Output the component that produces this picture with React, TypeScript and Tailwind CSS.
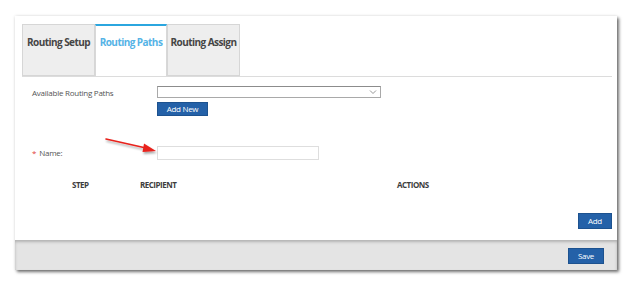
import React from 'react';

const FONT = { fontFamily: '"Open Sans", "Liberation Sans", sans-serif' };

function Tab({ label, active }: { label: string; active?: boolean }) {
  return (
    <div
      className={
        active
          ? 'w-[72px] h-[52px] -mb-px bg-white border-t-2 border-t-[#2ba6df] border-x border-x-[#d8d8d8] pt-[9px] text-center text-[10px] font-bold tracking-[-0.55px] text-[#55b3e6]'
          : 'w-[73px] h-[52px] bg-[#eeeeee] border border-[#d6d6d6] pt-[10px] text-center text-[10px] font-bold tracking-[-0.55px] text-[#454545]'
      }
    >
      {label}
    </div>
  );
}

function BlueButton({ children, className }: { children: React.ReactNode; className?: string }) {
  return (
    <button
      className={
        'h-[14px] bg-[#2461a8] border border-[#1d528f] text-white text-[8px] leading-[12px] tracking-[-0.3px] ' +
        (className ?? '')
      }
    >
      {children}
    </button>
  );
}

export default function App() {
  return (
    <div className="relative w-[626px] h-[282px] bg-white pl-[15px] pt-[16px]" style={FONT}>
      <div className="w-[602px] shadow-[2px_2px_3px_rgba(0,0,0,0.55),0_0_3px_rgba(0,0,0,0.12)]">
        <div className="h-[224px] bg-white pt-[8px] pl-[7px] pr-[5px] flex flex-col">
          <div className="flex h-[53px] border-b border-[#dcdcdc]">
            <Tab label="Routing Setup" />
            <Tab label="Routing Paths" active />
            <Tab label="Routing Assign" />
          </div>

          <div className="flex mt-[9px]">
            <div className="w-[135px] pl-[10px] pt-[1px] text-[8px] tracking-[-0.25px] text-[#555]">
              Available Routing Paths
            </div>
            <div className="flex flex-col gap-[4px]">
              <div className="relative w-[224px] h-[12px] border border-[#a9a9a9] border-t-[#8c8c8c] bg-white">
                <svg className="absolute right-[3px] top-[2px]" width="8" height="6" viewBox="0 0 8 6">
                  <path d="M1 1.5 L4 4.5 L7 1.5" fill="none" stroke="#8a8a8a" strokeWidth="0.9" />
                </svg>
              </div>
              <BlueButton className="w-[51px]">Add New</BlueButton>
            </div>
          </div>

          <div className="flex items-center mt-[30px]">
            <div className="w-[135px] pl-[10px] text-[8px] tracking-[-0.25px] text-[#555]">
              <span className="text-[#e0403a] mr-[3px]">*</span>Name:
            </div>
            <div className="w-[162px] h-[14px] border border-[#dedede] bg-white" />
          </div>

          <div className="flex mt-[19px] pl-[50px] text-[8px] font-bold tracking-[-0.5px] text-[#3d3d3d]">
            <div className="w-[68px]">STEP</div>
            <div className="w-[257px]">RECIPIENT</div>
            <div>ACTIONS</div>
          </div>

          <div className="flex justify-end mt-[22px]">
            <BlueButton className="w-[34px] h-[16px] leading-[14px]">Add</BlueButton>
          </div>
        </div>
        <div className="h-[30px] bg-[#e4e4e4] shadow-[inset_0_2px_3px_rgba(0,0,0,0.22)] flex items-center justify-end pr-[13px] pt-[2px]">
          <BlueButton className="w-[36px] h-[16px] leading-[14px]">Save</BlueButton>
        </div>
      </div>

      <svg className="absolute left-[100px] top-[134px]" width="62" height="24" viewBox="0 0 62 24">
        <defs>
          <filter id="sh" x="-20%" y="-50%" width="140%" height="200%">
            <feDropShadow dx="1" dy="2" stdDeviation="1.2" floodColor="#000" floodOpacity="0.35" />
          </filter>
        </defs>
        <g filter="url(#sh)">
          <line x1="6" y1="5" x2="46" y2="14" stroke="#e8231d" strokeWidth="1.6" strokeLinecap="round" />
          <path d="M56 17 L44 9.5 L42.5 18 Z" fill="#e8231d" />
        </g>
      </svg>
    </div>
  );
}
